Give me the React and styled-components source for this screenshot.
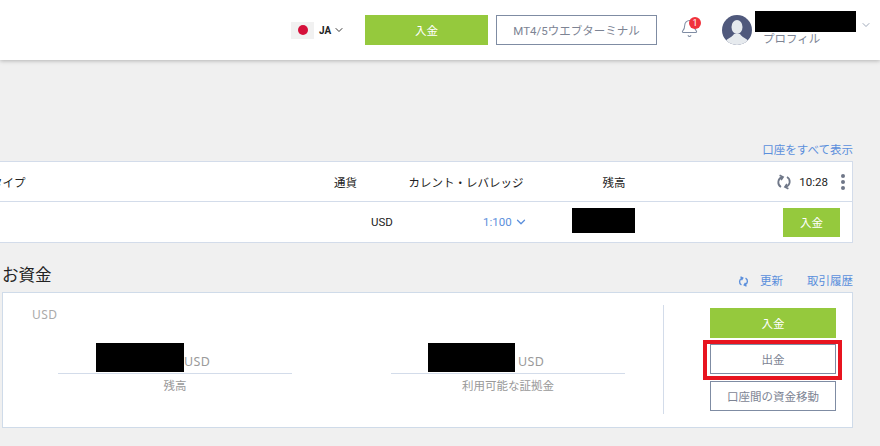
import React from 'react';
import styled, { createGlobalStyle } from 'styled-components';
import { Bell, ChevronDown } from 'lucide-react';

const GlobalStyle = createGlobalStyle`
  html, body {
    margin: 0;
    padding: 0;
    width: 880px;
    height: 446px;
    overflow: hidden;
    background: #f0f0f0;
    font-family: Roboto, "Noto Sans CJK JP", sans-serif;
    font-size: 11.5px;
    color: #222;
  }
`;

const Header = styled('header')`
  height: 60px;
  box-sizing: border-box;
  background: #fff;
  box-shadow: 0 1px 4px rgba(0, 0, 0, 0.25);
  display: flex;
  align-items: center;
  padding-left: 291px;
`;

const Lang = styled('div')`
  display: flex;
  align-items: center;
  gap: 2px;
  width: 74px;
  font-weight: 700;
  font-size: 10px;
  color: #222;
`;

const Flag = styled('span')`
  width: 23px;
  height: 17px;
  background: #f1f1f1;
  display: flex;
  align-items: center;
  justify-content: center;
  margin-right: 3px;
  &::after {
    content: '';
    width: 10px;
    height: 10px;
    border-radius: 50%;
    background: #d5103a;
  }
`;

const Button = styled('button')`
  box-sizing: border-box;
  width: ${p => p.$w}px;
  height: ${p => p.$h || 30}px;
  padding: 0;
  margin: 0;
  border-radius: 0;
  font-family: inherit;
  font-size: 11.5px;
  display: block;
  background: ${p => (p.$outline ? '#fff' : '#95c93d')};
  color: ${p => (p.$outline ? '#7d8494' : '#fff')};
  border: ${p => (p.$outline ? '1px solid #7f8ca3' : 'none')};
`;

const HeaderActions = styled('div')`
  display: flex;
  gap: 8px;
`;

const BellBox = styled('div')`
  position: relative;
  width: 20px;
  height: 22px;
  margin-left: 23px;
  color: #7f8ca3;
`;

const Badge = styled('span')`
  position: absolute;
  left: 9px;
  top: -2px;
  width: 12px;
  height: 12px;
  border-radius: 50%;
  background: #f0323c;
  color: #fff;
  font-size: 9px;
  line-height: 12px;
  text-align: center;
`;

const Avatar = styled('svg')`
  width: 30px;
  height: 30px;
  margin-left: 22px;
  margin-right: 3px;
  flex: none;
`;

const Profile = styled('div')`
  width: 105px;
  align-self: flex-start;
  padding-top: 11px;
`;

const ProfileName = styled('div')`
  width: 101px;
  height: 21px;
  background: #000;
`;

const ProfileLabel = styled('div')`
  margin: -1px 0 0 8px;
  color: #7d8494;
  line-height: 16px;
`;

const ProfileCaret = styled('div')`
  align-self: flex-start;
  margin-top: 19px;
  color: #7f8ca3;
`;

const Main = styled('main')`
  box-sizing: border-box;
  width: 853px;
  padding-top: 83px;
`;

const LinkRow = styled('div')`
  display: flex;
  justify-content: flex-end;
  height: 18px;
  line-height: 15px;
`;

const LinkText = styled('span')`
  color: #5b8fdc;
`;

const Table = styled('section')`
  background: #fff;
  border: 1px solid #d3dcea;
  border-left: none;
`;

const TableRow = styled('div')`
  display: grid;
  grid-template-columns: ${p => p.$cols};
  align-items: center;
  height: ${p => p.$h}px;
  & + & {
    border-top: 1px solid #d3dcea;
  }
`;

const Cell = styled('div')`
  text-align: ${p => p.$align || 'center'};
  white-space: nowrap;
`;

const ClippedLabel = styled('div')`
  margin-left: -9px;
`;

const Leverage = styled('div')`
  display: flex;
  align-items: center;
  gap: 2px;
  color: #5b8fdc;
`;

const Redacted = styled('div')`
  width: ${p => p.$w}px;
  height: ${p => p.$h}px;
  background: #000;
`;

const BalanceRedacted = styled(Redacted)`
  align-self: start;
  margin-top: 6px;
`;

const Tools = styled('div')`
  display: flex;
  align-items: center;
  justify-content: flex-end;
  padding-right: 7px;
  color: #222;
`;

const Time = styled('span')`
  margin-left: 7px;
`;

const Dots = styled('span')`
  display: flex;
  flex-direction: column;
  gap: 2px;
  margin-left: 13px;
  & > i {
    width: 4px;
    height: 4px;
    border-radius: 50%;
    background: #6f7788;
  }
`;

const FundsHead = styled('div')`
  display: flex;
  align-items: flex-start;
  height: 22px;
  margin-top: 22px;
  padding-left: 2px;
`;

const FundsTitle = styled('h2')`
  flex: 1;
  margin: 2px 0 0;
  font-size: 16.5px;
  line-height: 18px;
  font-weight: 400;
  color: #222;
`;

const FundsLinks = styled('div')`
  display: flex;
  align-items: center;
  margin-top: 9px;
  line-height: 14px;
`;

const RefreshLink = styled('span')`
  display: flex;
  align-items: center;
  gap: 11px;
  margin-right: 24px;
  color: #5b8fdc;
`;

const FundsPanel = styled('section')`
  box-sizing: border-box;
  display: flex;
  width: 851px;
  height: 136px;
  margin: 5px 0 0 2px;
  background: #fff;
  border: 1px solid #cfdbe9;
`;

const FundsInfo = styled('div')`
  width: 660px;
  padding: 14px 0 0 29px;
  box-sizing: border-box;
`;

const CurrencyLabel = styled('div')`
  font-family: "Noto Sans", sans-serif;
  font-size: 12px;
  letter-spacing: 0.5px;
  line-height: 15px;
  color: #aaa;
`;

const Metrics = styled('div')`
  display: flex;
  gap: 99px;
  margin: 13px 0 0 26px;
  padding-top: 8px;
`;

const Metric = styled('div')`
  width: 234px;
`;

const Amount = styled('div')`
  display: flex;
  align-items: flex-end;
  gap: ${p => p.$gap}px;
  padding-left: ${p => p.$indent}px;
  padding-bottom: 1px;
  border-bottom: 1px solid #d3dcea;
`;

const AmountUnit = styled('span')`
  font-family: "Noto Sans", sans-serif;
  font-size: 12.5px;
  letter-spacing: 0.4px;
  line-height: 15px;
  margin-bottom: 3px;
  color: #9a9a9a;
`;

const MetricLabel = styled('div')`
  margin-top: 4px;
  text-align: center;
  color: #999;
  font-size: 11.5px;
  line-height: 16px;
`;

const Divider = styled('div')`
  width: 1px;
  height: 109px;
  margin-top: 12px;
  background: #d3dcea;
`;

const FundsActions = styled('div')`
  width: 126px;
  margin: 15px 0 0 46px;
  display: flex;
  flex-direction: column;
`;

const Highlight = styled('div')`
  position: relative;
  margin-top: 6px;
  &::after {
    content: '';
    position: absolute;
    left: -7px;
    right: -6px;
    top: -4px;
    bottom: -6px;
    border: 4px solid #e8141f;
    pointer-events: none;
  }
`;

const TransferButton = styled(Button)`
  margin-top: 7px;
`;

const SyncIcon = ({ size, color, strokeWidth }) => (
  <svg width={size} height={size} viewBox="0 0 16 16" fill="none" stroke={color} strokeWidth={strokeWidth}>
    <path d="M6 3.2 A5.4 5.4 0 0 0 5 13" />
    <path d="M10 12.8 A5.4 5.4 0 0 0 11 3" />
    <path d="M3.6 1.2 L7 3 L5 6" />
    <path d="M12.4 14.8 L9 13 L11 10" />
  </svg>
);

export default function App() {
  return (
    <>
      <GlobalStyle />
      <Header>
        <Lang>
          <Flag />
          JA
          <ChevronDown size={12} strokeWidth={1.8} />
        </Lang>
        <HeaderActions>
          <Button $w={123}>入金</Button>
          <Button $w={161} $outline>MT4/5ウエブターミナル</Button>
        </HeaderActions>
        <BellBox>
          <Bell size={19} strokeWidth={1.3} />
          <Badge>1</Badge>
        </BellBox>
        <Avatar viewBox="0 0 30 30">
          <defs>
            <clipPath id="avatarClip">
              <circle cx="15" cy="15" r="15" />
            </clipPath>
          </defs>
          <circle cx="15" cy="15" r="15" fill="#50597c" />
          <g clipPath="url(#avatarClip)" fill="#e6eaee">
            <ellipse cx="15" cy="12" rx="5.5" ry="7" />
            <path d="M2 30 C3 23 10 23 12 19 L18 19 C20 23 27 23 28 30 Z" />
          </g>
        </Avatar>
        <Profile>
          <ProfileName />
          <ProfileLabel>プロフィル</ProfileLabel>
        </Profile>
        <ProfileCaret>
          <ChevronDown size={12} strokeWidth={1.5} />
        </ProfileCaret>
      </Header>
      <Main>
        <LinkRow>
          <LinkText>口座をすべて表示</LinkText>
        </LinkRow>
        <Table>
          <TableRow $cols="334px 36px 38px 116px 68px 44px 1fr" $h={39}>
            <Cell $align="left"><ClippedLabel>タイプ</ClippedLabel></Cell>
            <Cell $align="left">通貨</Cell>
            <span />
            <Cell>カレント・レバレッジ</Cell>
            <span />
            <Cell>残高</Cell>
            <Tools>
              <SyncIcon size={16} color="#6f7788" strokeWidth={1.8} />
              <Time>10:28</Time>
              <Dots><i /><i /><i /></Dots>
            </Tools>
          </TableRow>
          <TableRow $cols="371px 112px 89px 63px 148px 57px" $h={40}>
            <span />
            <Cell $align="left">USD</Cell>
            <Leverage>
              1:100
              <ChevronDown size={14} strokeWidth={2.2} />
            </Leverage>
            <BalanceRedacted $w={63} $h={25} />
            <span />
            <Button $w={57} $h={29}>入金</Button>
          </TableRow>
        </Table>
        <FundsHead>
          <FundsTitle>お資金</FundsTitle>
          <FundsLinks>
            <RefreshLink>
              <SyncIcon size={11} color="#5b8fdc" strokeWidth={2} />
              更新
            </RefreshLink>
            <LinkText>取引履歴</LinkText>
          </FundsLinks>
        </FundsHead>
        <FundsPanel>
          <FundsInfo>
            <CurrencyLabel>USD</CurrencyLabel>
            <Metrics>
              <Metric>
                <Amount $gap={0} $indent={38}>
                  <Redacted $w={88} $h={29} />
                  <AmountUnit>USD</AmountUnit>
                </Amount>
                <MetricLabel>残高</MetricLabel>
              </Metric>
              <Metric>
                <Amount $gap={3} $indent={37}>
                  <Redacted $w={87} $h={29} />
                  <AmountUnit>USD</AmountUnit>
                </Amount>
                <MetricLabel>利用可能な証拠金</MetricLabel>
              </Metric>
            </Metrics>
          </FundsInfo>
          <Divider />
          <FundsActions>
            <Button $w={126}>入金</Button>
            <Highlight>
              <Button $w={126} $outline>出金</Button>
            </Highlight>
            <TransferButton $w={126} $outline>口座間の資金移動</TransferButton>
          </FundsActions>
        </FundsPanel>
      </Main>
    </>
  );
}
